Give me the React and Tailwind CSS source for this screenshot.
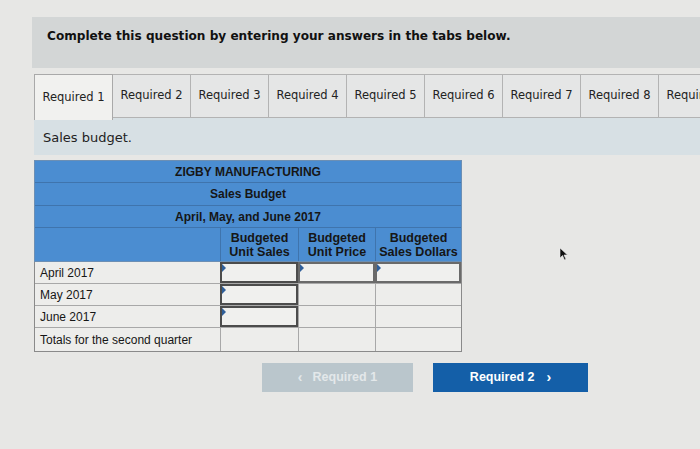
import React from 'react';

const tabs = ['Required 1', 'Required 2', 'Required 3', 'Required 4', 'Required 5', 'Required 6', 'Required 7', 'Required 8', 'Required 9'];

const rows = ['April 2017', 'May 2017', 'June 2017'];

function Marker() {
    return <span className="absolute left-0 top-0 w-0 h-0 border-t-[4px] border-b-[4px] border-l-[4px] border-t-transparent border-b-transparent border-l-[#2f5f9a]" />;
}

export default function App() {
    return (
        <div className="w-[700px] h-[449px] overflow-hidden bg-[#e7e7e5] relative" style={{ fontFamily: '"DejaVu Sans", Verdana, sans-serif' }}>
            {/* question banner */}
            <div className="ml-[32px] mt-[17px] h-[51px] bg-[#d3d6d6] pl-[15px] pt-[10px]">
                <p className="text-[12.1px] font-bold text-[#111] leading-[18px]">Complete this question by entering your answers in the tabs below.</p>
            </div>

            {/* tabs */}
            <div className="ml-[34px] mt-[6px] flex items-start">
                {tabs.map((t, i) => (
                    <div
                        key={t}
                        className={
                            i === 0
                                ? 'w-[79px] h-[46px] shrink-0 bg-[#f1f1ef] border border-b-0 border-[#a9a9a9] flex items-center justify-center text-[11.5px] text-[#222]'
                                : 'w-[78px] h-[44px] shrink-0 bg-[#e5e6e6] border border-l-0 border-[#b3b3b3] flex items-center justify-center text-[11.5px] text-[#222]'
                        }
                    >
                        {t}
                    </div>
                ))}
            </div>

            {/* tab content */}
            <div className="ml-[34px] -mt-[2px] h-[37px] bg-[#d7e0e4] flex items-center pl-[9px] pt-[3px]">
                <p className="text-[13px] text-[#222]">Sales budget.</p>
            </div>

            <div className="ml-[34px] mt-[5px] w-[428px] text-[12px] text-[#161616]" style={{ fontFamily: '"Liberation Sans", Arial, sans-serif' }}>
                <div className="bg-[#4b8dd1] border border-[#6c8fb4]">
                    <div className="h-[22px] flex items-center justify-center font-bold border-b border-[#3f74ad]">ZIGBY MANUFACTURING</div>
                    <div className="h-[23px] flex items-center justify-center font-bold border-b border-[#3f74ad]">Sales Budget</div>
                    <div className="h-[22px] flex items-center justify-center font-bold border-b border-[#3f74ad]">April, May, and June 2017</div>
                    <div className="h-[33px] flex font-bold leading-[14px] text-[12.5px]">
                        <div className="w-[185px]" />
                        <div className="w-[78px] border-l border-[#3f74ad] flex items-center justify-center text-center">Budgeted<br />Unit Sales</div>
                        <div className="w-[77px] border-l border-[#3f74ad] flex items-center justify-center text-center">Budgeted<br />Unit Price</div>
                        <div className="flex-1 border-l border-[#3f74ad] flex items-center justify-center text-center">Budgeted<br />Sales Dollars</div>
                    </div>
                </div>
                <div className="border-x border-b border-[#8a8a8a] bg-[#ededeb]">
                    {rows.map((r, i) => (
                        <div key={r} className="h-[22px] flex border-b border-[#a8a8a8]">
                            <div className="w-[185px] flex items-center pl-[5px]">{r}</div>
                            <div className="w-[78px] relative border-2 border-[#4c4c4c] bg-[#f0f0ee]">
                                <Marker />
                            </div>
                            <div className={i === 0 ? 'w-[77px] relative border-2 border-[#6a6a6a] bg-[#f0f0ee]' : 'w-[77px] border-l border-[#a8a8a8]'}>
                                {i === 0 && <Marker />}
                            </div>
                            <div className={i === 0 ? 'flex-1 relative border-2 border-[#6a6a6a] bg-[#f0f0ee]' : 'flex-1 border-l border-[#a8a8a8]'}>
                                {i === 0 && <Marker />}
                            </div>
                        </div>
                    ))}
                    <div className="h-[23px] flex">
                        <div className="w-[185px] flex items-center pl-[5px]">Totals for the second quarter</div>
                        <div className="w-[78px] border-l border-[#a8a8a8]" />
                        <div className="w-[77px] border-l border-[#a8a8a8]" />
                        <div className="flex-1 border-l border-[#a8a8a8]" />
                    </div>
                </div>
            </div>

            {/* nav buttons */}
            <div className="ml-[262px] mt-[11px] flex gap-[20px]" style={{ fontFamily: '"Liberation Sans", Arial, sans-serif' }}>
                <button className="w-[151px] h-[29px] bg-[#bac6cc] text-[#e3e8ea] font-bold text-[12.5px] flex items-center justify-center gap-[10px]">
                    <span className="text-[14px]">‹</span>
                    <span>Required 1</span>
                </button>
                <button className="w-[155px] h-[29px] bg-[#145fa8] text-white font-bold text-[12.5px] flex items-center justify-center gap-[12px]">
                    <span>Required 2</span>
                    <span className="text-[14px]">›</span>
                </button>
            </div>

            {/* mouse cursor */}
            <svg className="absolute left-[559px] top-[247px]" width="10" height="14" viewBox="0 0 10 14">
                <path d="M1 1 L1 11 L3.5 8.5 L5.5 13 L7 12.3 L5 8 L8.5 8 Z" fill="#111" stroke="#eee" strokeWidth="0.6" />
            </svg>
        </div>
    );
}
